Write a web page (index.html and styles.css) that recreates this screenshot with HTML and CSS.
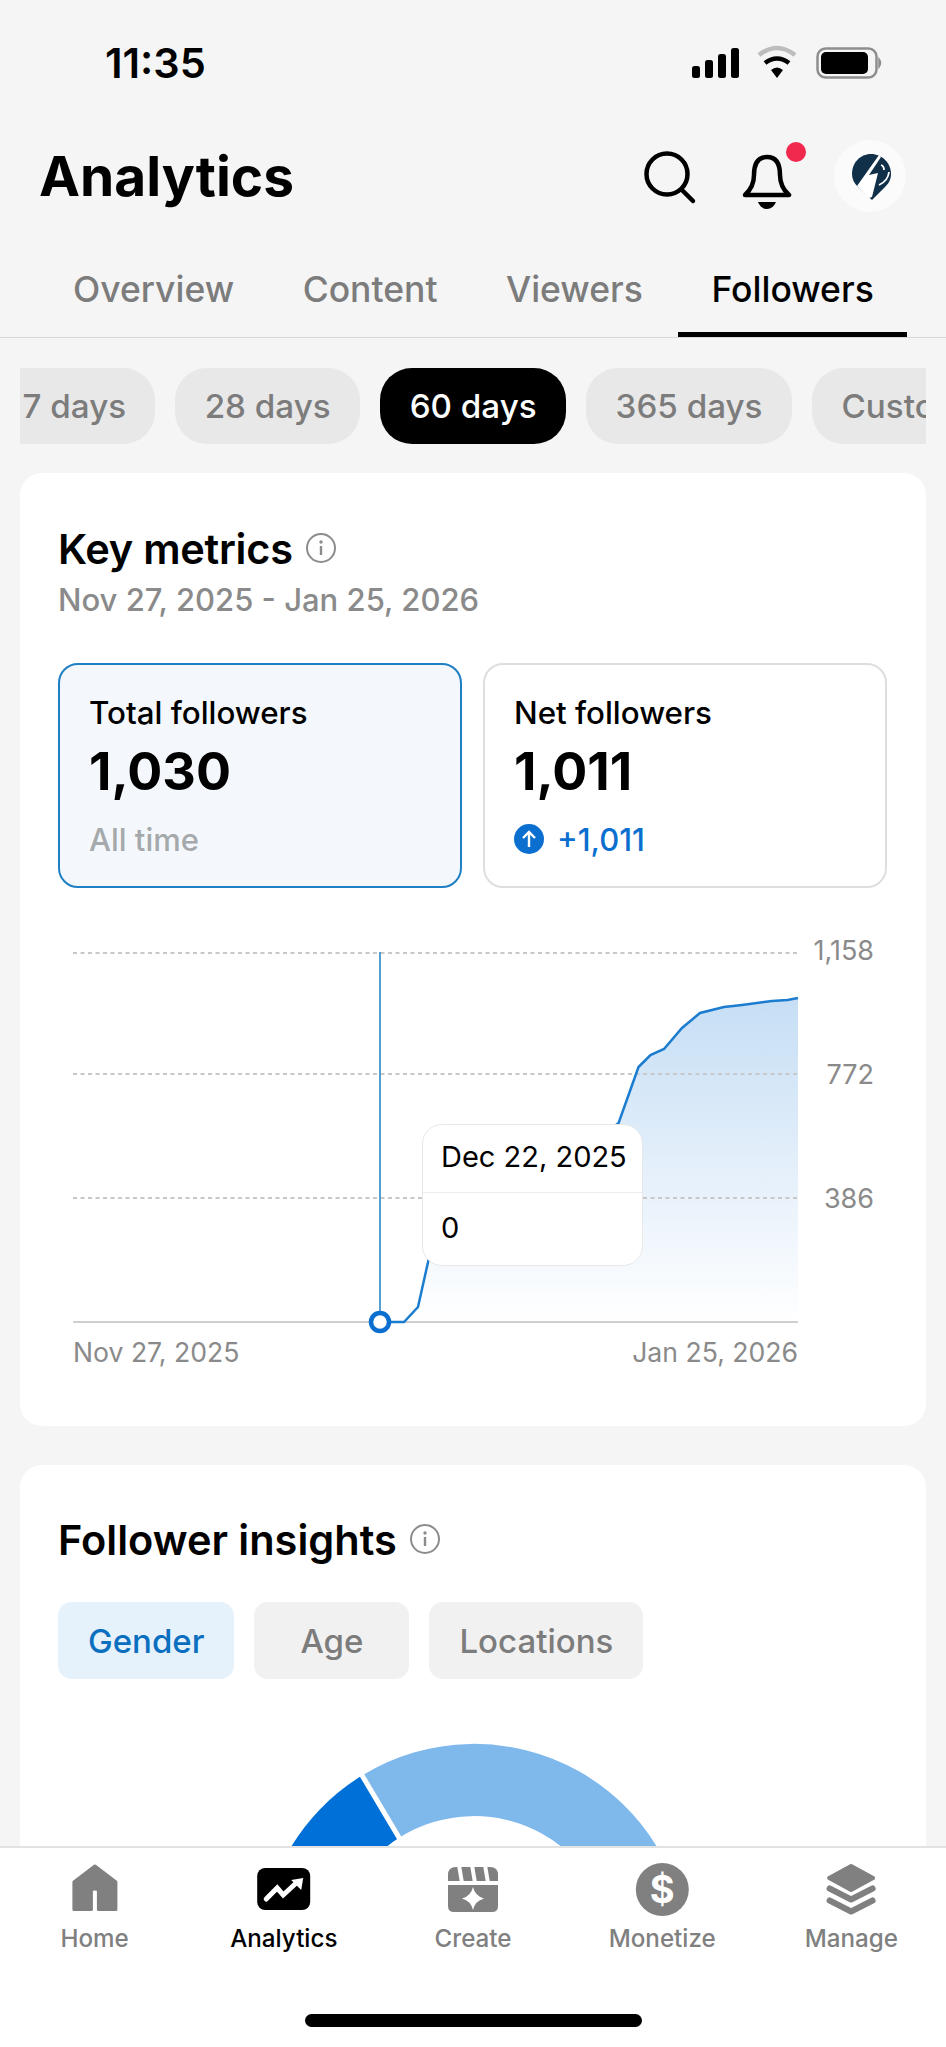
FILE: index.html
```html
<!DOCTYPE html>
<html lang="en">
<head>
    <meta charset="UTF-8">
    <meta name="viewport" content="width=device-width, initial-scale=1.0">
    <title>Analytics</title>
    <link rel="stylesheet" href="styles.css">
</head>
<body>
<div class="page">
    <!-- Status bar -->
    <div class="status">
        <span class="time">11:35</span>
        <svg class="status-icons" viewBox="680 40 210 46" width="210" height="46">
            <rect x="692" y="66" width="8" height="12" rx="2.5"/>
            <rect x="705" y="60" width="8" height="18" rx="2.5"/>
            <rect x="718" y="54" width="8" height="24" rx="2.5"/>
            <rect x="731" y="48" width="8" height="30" rx="2.5"/>
            <path d="M759 55 Q777 41 795 55" fill="none" stroke="#bdbdbd" stroke-width="4.5"/>
            <path d="M765 63 Q777 54 789 63" fill="none" stroke="#000" stroke-width="4.5"/>
            <path d="M771 70 Q777 65 783 70 L777 78 Z"/>
            <rect x="817.5" y="48.5" width="59" height="29" rx="8" fill="none" stroke="#8e8e8e" stroke-width="2.5"/>
            <rect x="821" y="52" width="47" height="22" rx="5"/>
            <path d="M879 59 Q882 63 879 67 Z" fill="#8e8e8e" stroke="#8e8e8e" stroke-width="1.5"/>
        </svg>
    </div>

    <!-- Header -->
    <div class="header">
        <h1>Analytics</h1>
        <svg class="search-icon" viewBox="640 146 60 60" width="60" height="60">
            <circle cx="667" cy="174" r="20.5" fill="none" stroke="#000" stroke-width="4.5"/>
            <path d="M682 190 L693 201" fill="none" stroke="#000" stroke-width="4.5" stroke-linecap="round"/>
        </svg>
        <svg class="bell-icon" viewBox="738 136 70 70" width="70" height="70">
            <path d="M745 190 Q754 182 754 170 Q754 152 767 152 Q780 152 780 170 Q780 182 789 190 Z" fill="none" stroke="#000" stroke-width="4.5" stroke-linejoin="round"/>
            <path d="M758 197 H776 Q773 204 767 204 Q761 204 758 197 Z"/>
            <circle cx="796" cy="147" r="10" fill="#f2294e"/>
        </svg>
        <div class="avatar">
            <svg viewBox="834 140 72 72" width="72" height="72">
                <path d="M871 154 C882 154 891 163 891 174 C891 180 888 184 885 187 L872 200 L858 187 C854 183 852 179 852 174 C852 163 860 154 871 154 Z" fill="#10304a"/>
                <path d="M879 155 L857 186 L869 198 L872 197 L878 173 L869 175 L881 157 Z" fill="#fff"/>
                <path d="M881 165 Q884 166 884 170 M889 172 Q888 181 879 185" fill="none" stroke="#fff" stroke-width="1.8"/>
            </svg>
        </div>
    </div>

    <!-- Tabs -->
    <div class="tabs">
        <div class="tab">Overview</div>
        <div class="tab">Content</div>
        <div class="tab">Viewers</div>
        <div class="tab active">Followers</div>
    </div>

    <div class="main">
        <!-- Date range chips -->
        <div class="chips">
            <div class="chip first">7 days</div>
            <div class="chip">28 days</div>
            <div class="chip active">60 days</div>
            <div class="chip">365 days</div>
            <div class="chip">Custom</div>
        </div>

        <!-- Key metrics -->
        <div class="card metrics-card">
            <div class="card-title">
                <h2>Key metrics</h2>
                <svg class="info" viewBox="0 0 32 32" width="32" height="32">
                    <circle cx="16" cy="16" r="14" fill="none" stroke="#8c8c8c" stroke-width="2"/>
                    <circle cx="16" cy="10" r="1.7" fill="#8c8c8c"/>
                    <path d="M16 14 V23" stroke="#8c8c8c" stroke-width="2.4"/>
                </svg>
            </div>
            <div class="date-range">Nov 27, 2025 - Jan 25, 2026</div>

            <div class="boxes">
                <div class="box selected">
                    <div class="box-label">Total followers</div>
                    <div class="box-value">1,030</div>
                    <div class="box-note">All time</div>
                </div>
                <div class="box">
                    <div class="box-label">Net followers</div>
                    <div class="box-value">1,011</div>
                    <div class="box-note up">
                        <svg viewBox="0 0 30 30" width="30" height="30">
                            <circle cx="15" cy="15" r="15" fill="#0b6fcf"/>
                            <path d="M15 23 V8 M9 14 L15 8 L21 14" fill="none" stroke="#fff" stroke-width="2.4"/>
                        </svg>
                        +1,011
                    </div>
                </div>
            </div>

            <div class="chart">
                <svg viewBox="58 930 830 450" width="830" height="450">
                    <defs>
                        <linearGradient id="area" x1="0" y1="0" x2="0" y2="1">
                            <stop offset="0" stop-color="#c6def5"/>
                            <stop offset="1" stop-color="#ffffff"/>
                        </linearGradient>
                    </defs>
                    <path d="M380 1322 L404 1322 L418 1307 L428.5 1260 L618.6 1123 L638.5 1067 L650.5 1055 L664 1049 L682 1028 L700 1013 L724 1007 L742 1005 L772 1001 L787.5 1000 L798 998 V1322 Z" fill="url(#area)"/>
                    <g class="grid">
                        <path d="M73 953 H798"/>
                        <path d="M73 1074 H798"/>
                        <path d="M73 1198 H798"/>
                    </g>
                    <path d="M73 1322 H798" stroke="#cfcfcf" stroke-width="2"/>
                    <path d="M380 952 V1322" stroke="#1f7fc4" stroke-width="1.5"/>
                    <path d="M380 1322 L404 1322 L418 1307 L428.5 1260 L618.6 1123 L638.5 1067 L650.5 1055 L664 1049 L682 1028 L700 1013 L724 1007 L742 1005 L772 1001 L787.5 1000 L798 998" fill="none" stroke="#1c7ccf" stroke-width="2.5"/>
                    <circle cx="380" cy="1322" r="9" fill="#fff" stroke="#0b6fcf" stroke-width="4.5"/>
                    <text class="axis" x="874" y="960" text-anchor="end">1,158</text>
                    <text class="axis" x="874" y="1084" text-anchor="end">772</text>
                    <text class="axis" x="874" y="1208" text-anchor="end">386</text>
                    <text class="axis date-label" x="73" y="1362">Nov 27, 2025</text>
                    <text class="axis date-label" x="798" y="1362" text-anchor="end">Jan 25, 2026</text>
                </svg>
                <div class="tooltip">
                    <div class="tooltip-date">Dec 22, 2025</div>
                    <div class="tooltip-value">0</div>
                </div>
            </div>
        </div>

        <!-- Follower insights -->
        <div class="card insights-card">
            <div class="card-title">
                <h2>Follower insights</h2>
                <svg class="info" viewBox="0 0 32 32" width="32" height="32">
                    <circle cx="16" cy="16" r="14" fill="none" stroke="#8c8c8c" stroke-width="2"/>
                    <circle cx="16" cy="10" r="1.7" fill="#8c8c8c"/>
                    <path d="M16 14 V23" stroke="#8c8c8c" stroke-width="2.4"/>
                </svg>
            </div>
            <div class="seg">
                <div class="seg-item active">Gender</div>
                <div class="seg-item">Age</div>
                <div class="seg-item">Locations</div>
            </div>
            <svg class="donut" viewBox="20 1679 906 300" width="906" height="300">
                <path d="M260 1958 A214 214 0 0 1 362 1775.5 L399.5 1837.6 A141 141 0 0 0 334 1958 Z" fill="#0070d9"/>
                <path d="M362 1775.5 A214 214 0 0 1 688 1958 L614 1958 A140 140 0 0 0 399.5 1837.6 Z" fill="#7fb9ec"/>
                <path d="M360 1772 L401 1841" stroke="#fff" stroke-width="5"/>
            </svg>
        </div>
    </div>

    <!-- Bottom navigation -->
    <div class="nav">
        <div class="nav-items">
            <div class="nav-item">
                <svg viewBox="66.6 1862 56 56" width="56" height="56">
                    <path d="M94.5 1866 L115.5 1882 V1909.5 H98 V1891 Q98 1889 94.5 1889 Q91 1889 91 1891 V1909.5 H73.5 V1882 Z" fill="#808080" stroke="#808080" stroke-width="3" stroke-linejoin="round"/>
                </svg>
                <span>Home</span>
            </div>
            <div class="nav-item active">
                <svg viewBox="255.8 1862 56 56" width="56" height="56">
                    <rect x="257" y="1868" width="53" height="42" rx="8"/>
                    <path d="M266 1899 L277 1888 L283 1895 L296 1883" fill="none" stroke="#fff" stroke-width="5" stroke-linecap="round"/>
                    <path d="M291 1880 L303 1878 L301 1890 Z" fill="#fff"/>
                </svg>
                <span>Analytics</span>
            </div>
            <div class="nav-item">
                <svg viewBox="445 1862 56 56" width="56" height="56">
                    <path d="M448 1881 V1875 Q448 1867 456 1867 H490 Q498 1867 498 1875 V1881 Z" fill="#808080"/>
                    <path d="M459 1865 L462 1883 M472 1865 L475 1883 M485 1865 L488 1883" stroke="#fff" stroke-width="4"/>
                    <path d="M448 1885 H498 V1906 Q498 1912 492 1912 H454 Q448 1912 448 1906 Z" fill="#808080"/>
                    <path d="M473 1887 Q475 1896 484 1898.5 Q475 1901 473 1910 Q471 1901 462 1898.5 Q471 1896 473 1887 Z" fill="#fff"/>
                </svg>
                <span>Create</span>
            </div>
            <div class="nav-item">
                <svg viewBox="634.2 1862 56 56" width="56" height="56">
                    <circle cx="662.5" cy="1889.5" r="26.5" fill="#808080"/>
                    <text class="dollar" x="662.5" y="1903" text-anchor="middle">$</text>
                </svg>
                <span>Monetize</span>
            </div>
            <div class="nav-item">
                <svg viewBox="823.4 1862 56 56" width="56" height="56">
                    <path d="M851.5 1866 L873.5 1878 L851.5 1890 L829.5 1878 Z" fill="#808080" stroke="#808080" stroke-width="4" stroke-linejoin="round"/>
                    <path d="M830 1888.5 L851.5 1899.5 L873 1888.5" fill="none" stroke="#808080" stroke-width="6" stroke-linecap="round" stroke-linejoin="round"/>
                    <path d="M830 1900.5 L851.5 1911.5 L873 1900.5" fill="none" stroke="#808080" stroke-width="6" stroke-linecap="round" stroke-linejoin="round"/>
                </svg>
                <span>Manage</span>
            </div>
        </div>
        <div class="home-bar"></div>
    </div>
</div>
</body>
</html>
```

FILE: styles.css
```css
/* General Styles */
* {
    box-sizing: border-box;
}

body {
    margin: 0;
    background: #f5f5f5;
    font-family: Inter, "Noto Sans", sans-serif;
    color: #000;
}

.page {
    width: 946px;
    height: 2047px;
    display: flex;
    flex-direction: column;
    overflow: hidden;
}

/* Status bar */
.status {
    height: 126px;
    flex-shrink: 0;
    display: flex;
    justify-content: space-between;
    align-items: center;
    padding-left: 105px;
    padding-right: 56px;
}

.time {
    font-size: 41.5px;
    font-weight: 600;
}

/* Header */
.header {
    height: 100px;
    flex-shrink: 0;
    display: flex;
    align-items: center;
    padding: 0 40px 0 39px;
}

h1 {
    margin: 0 auto 0 0;
    font-size: 55px;
    font-weight: 700;
}

.bell-icon {
    margin-left: 38px;
}

.avatar {
    margin-left: 26px;
    width: 72px;
    height: 72px;
    border-radius: 50%;
    background: #fbfbfb;
}

.avatar svg {
    display: block;
}

/* Tabs */
.tabs {
    height: 112px;
    flex-shrink: 0;
    display: flex;
    gap: 1.5px;
    padding-left: 39.5px;
    border-bottom: 1px solid #d8d8d8;
}

.tab {
    height: 111px;
    padding: 44px 33.5px 0;
    font-size: 35.5px;
    font-weight: 500;
    line-height: 40px;
    color: #7c7c7c;
}

.tab.active {
    color: #000;
    border-bottom: 5px solid #000;
}

.main {
    flex: 1;
    min-height: 0;
    overflow: hidden;
    padding: 30px 20px 0;
}

/* Date chips */
.chips {
    display: flex;
    gap: 20px;
    overflow: hidden;
}

.chip {
    flex-shrink: 0;
    height: 76px;
    padding: 0 29.5px;
    display: flex;
    align-items: center;
    border-radius: 32px;
    background: #e8e8e8;
    color: #7c7c7c;
    font-size: 33.2px;
    font-weight: 500;
}

.chip.first {
    margin-left: -27px;
    padding-right: 29px;
}

.chip.active {
    background: #000;
    color: #fff;
}

/* Cards */
.card {
    background: #fff;
    border-radius: 22px;
}

.metrics-card {
    margin-top: 29px;
    height: 953px;
    padding: 52px 38px 0;
}

.metrics-card h2 {
    letter-spacing: -0.25px;
}

.insights-card {
    margin-top: 39px;
    padding: 51px 38px 0;
}

.card-title {
    display: flex;
    align-items: center;
    gap: 12px;
    height: 48px;
}

h2 {
    margin: 0;
    font-size: 41.5px;
    font-weight: 600;
}

.info {
    margin-top: -2px;
}

.date-range {
    margin-top: 7px;
    font-size: 31px;
    line-height: 40px;
    font-weight: 500;
    color: #8a8a8a;
}

/* Metric boxes */
.boxes {
    display: flex;
    gap: 21px;
    margin-top: 43px;
}

.box {
    width: 404px;
    height: 225px;
    padding: 29px 29px 0;
    border: 2px solid #dedede;
    border-radius: 20px;
}

.box.selected {
    background: #f4f8fc;
    border-color: #1f7fc4;
}

.box-label {
    font-size: 31.3px;
    line-height: 38px;
    font-weight: 500;
}

.box-value {
    margin-top: 9px;
    font-size: 52px;
    line-height: 62px;
    font-weight: 700;
}

.box-note {
    margin-top: 16px;
    height: 40px;
    display: flex;
    align-items: center;
    gap: 13px;
    font-size: 31px;
    font-weight: 500;
    color: #a6a9ac;
}

.box-note.up {
    color: #0b6fcf;
}

/* Chart */
.chart {
    position: relative;
    margin-top: 42px;
    height: 450px;
}

.chart svg {
    display: block;
}

.grid path {
    stroke: #c8c8c8;
    stroke-width: 2;
    stroke-dasharray: 4 3.5;
}

.axis {
    font-size: 27px;
    fill: #8a8a8a;
}

.date-label {
    font-size: 26.6px;
}

.tooltip {
    position: absolute;
    left: 364px;
    top: 194px;
    width: 221px;
    height: 142px;
    background: #fff;
    border: 1.5px solid #e8e8e8;
    border-radius: 20px;
    font-size: 29px;
}

.tooltip-date {
    height: 68px;
    padding: 14px 18px 0;
    border-bottom: 1.5px solid #ececec;
    white-space: nowrap;
}

.tooltip-value {
    padding: 17px 18px 0;
}

/* Follower insights */
.seg {
    display: flex;
    gap: 20px;
    margin-top: 38px;
}

.seg-item {
    min-width: 155px;
    height: 77px;
    padding: 0 30px;
    display: flex;
    align-items: center;
    justify-content: center;
    border-radius: 14px;
    background: #f1f1f1;
    color: #7c7c7c;
    font-size: 33px;
    font-weight: 500;
}

.seg-item.active {
    background: #e6f2fb;
    color: #0b6fbf;
}

.donut {
    display: block;
    margin-left: -38px;
}

/* Bottom navigation */
.nav {
    flex-shrink: 0;
    height: 201px;
    background: #fff;
    border-top: 2px solid #e2e2e2;
    padding-top: 14px;
}

.nav-items {
    display: flex;
}

.nav-item {
    flex: 1;
    display: flex;
    flex-direction: column;
    align-items: center;
    color: #808080;
    font-size: 24.2px;
    font-weight: 500;
    line-height: 32px;
}

.nav-item svg {
    display: block;
    margin-bottom: 5px;
}

.nav-item.active {
    color: #000;
}

.dollar {
    font-size: 38px;
    font-weight: 700;
    fill: #fff;
}

.home-bar {
    width: 337px;
    height: 13px;
    margin: 59px auto 0;
    border-radius: 7px;
    background: #000;
}
```
